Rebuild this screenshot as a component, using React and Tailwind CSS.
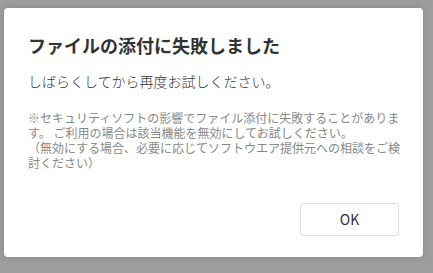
import React from 'react'

export default function App() {
  return (
    <div
      className="w-[433px] h-[273px] bg-[#9d9d9d] pt-[8px] pl-[4px] overflow-hidden"
      style={{ fontFamily: '"Noto Sans CJK JP", "Noto Sans", sans-serif' }}
    >
      <div className="w-[419px] h-[249px] bg-white rounded-[4px] shadow-[0_0_6px_rgba(0,0,0,0.15)] pt-[24px] pl-[24px] pr-[20px] flex flex-col">
        <h2 className="text-[18px] leading-[26px] font-bold text-[#333]">
          ファイルの添付に失敗しました
        </h2>
        <p className="mt-[13px] text-[14px] leading-[20px] font-light text-[#333]">
          しばらくしてから再度お試しください。
        </p>
        <p className="mt-[19px] w-[376px] text-[12px] leading-[15px] text-[#888]">
          ※セキュリティソフトの影響でファイル添付に失敗することがあります。 ご利用の場合は該当機能を無効にしてお試しください。
          <br />
          （無効にする場合、必要に応じてソフトウエア提供元への相談をご検討ください）
        </p>
        <div className="mt-[33px] flex justify-end pr-[4px]">
          <button className="w-[99px] h-[33px] border border-[#dcdcdc] rounded-[4px] bg-white text-[14px] text-[#333]">
            OK
          </button>
        </div>
      </div>
    </div>
  )
}
